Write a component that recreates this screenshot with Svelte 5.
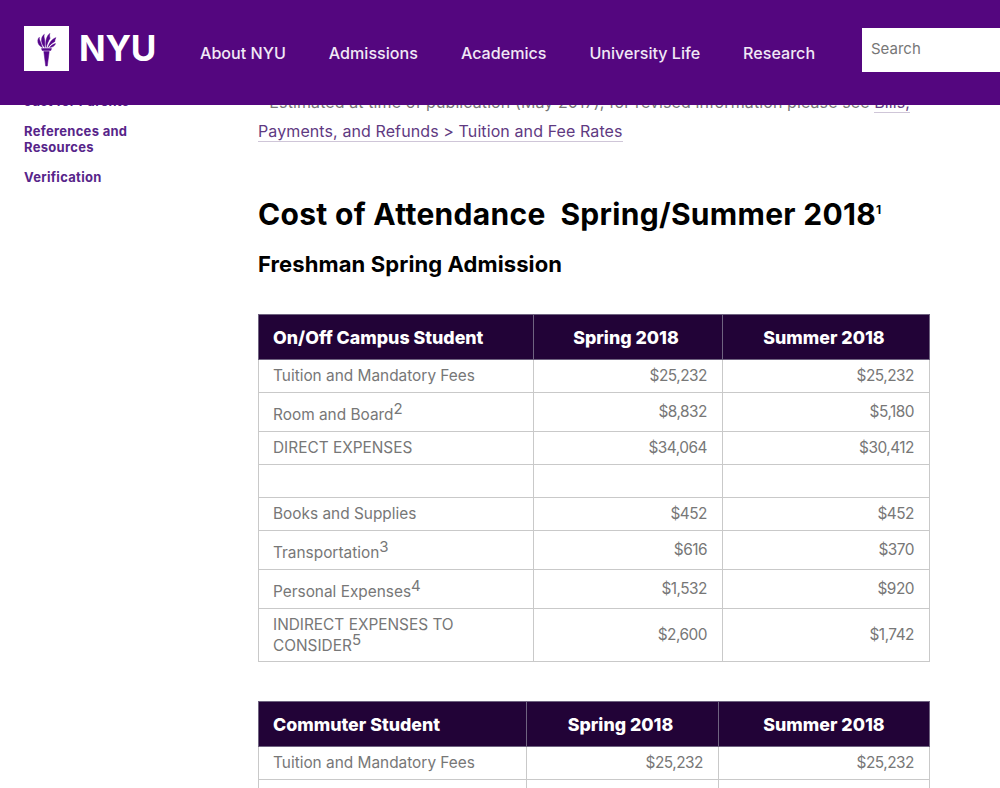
<script>
  const nav = ['About NYU', 'Admissions', 'Academics', 'University Life', 'Research'];
  const t1 = [
    { label: 'Tuition and Mandatory Fees', a: '$25,232', b: '$25,232', h: 33 },
    { label: 'Room and Board', sup: '2', a: '$8,832', b: '$5,180', h: 39, low: true },
    { label: 'DIRECT EXPENSES', a: '$34,064', b: '$30,412', h: 33 },
    { label: '', a: '', b: '', h: 33 },
    { label: 'Books and Supplies', a: '$452', b: '$452', h: 33 },
    { label: 'Transportation', sup: '3', a: '$616', b: '$370', h: 39, low: true },
    { label: 'Personal Expenses', sup: '4', a: '$1,532', b: '$920', h: 39, low: true },
    { label: 'INDIRECT EXPENSES TO CONSIDER', sup: '5', a: '$2,600', b: '$1,742', h: 53, wrap: true }
  ];
  const t2 = [
    { label: 'Tuition and Mandatory Fees', a: '$25,232', b: '$25,232', h: 33 },
    { label: '', a: '', b: '', h: 39 }
  ];
</script>

{#snippet table(title, rows, w1, w2, w3)}
  <table>
    <colgroup>
      <col style="width:{w1}px" /><col style="width:{w2}px" /><col style="width:{w3}px" />
    </colgroup>
    <thead>
      <tr><th class="first">{title}</th><th>Spring 2018</th><th>Summer 2018</th></tr>
    </thead>
    <tbody>
      {#each rows as r}
        <tr style="height:{r.h}px">
          <td class:low={r.low} class:wrap={r.wrap}>{r.label}{#if r.sup}<sup>{r.sup}</sup>{/if}</td>
          <td class="num">{r.a}</td>
          <td class="num">{r.b}</td>
        </tr>
      {/each}
    </tbody>
  </table>
{/snippet}

<div class="page">
  <header>
    <div class="brand">
      <div class="logo">
        <svg viewBox="0 0 45 45" width="45" height="45" aria-hidden="true">
          <g fill="#57068c" stroke="#57068c" stroke-width="0.5" stroke-linejoin="round">
            <path d="M19.800 25.500h5.400l-1.900 14.500h-1.600z"/>
            <path d="M17.500 22.600h10l-.7 1.900h-8.600z"/>
            <path d="M18.500 21.500c-3-1.500-4.900-3.800-4.700-7 .1-1.300.6-2.400 1.500-3.200-.2 1.300 0 2.400.6 3.300 1 2.300 1.600 4.600 2.600 6.900z"/>
            <path d="M20.700 21.500c-2.200-2.500-3.600-5.400-3.100-8.600.3-1.900 1.200-3.400 2.700-4.600-.5 1.800-.3 3.400.3 4.900.4 2.900.3 5.500.1 8.300z"/>
            <path d="M22.200 21.500c-.6-3-.6-6.300.5-9.400.6-1.900 1.600-3.500 3.100-4.700-.5 1.900-.2 3.400.3 4.800-1.800 2.900-3.100 5.900-3.900 9.300z"/>
            <path d="M23.900 21.500c.8-2.900 2.200-5.500 4.200-7.500 1.100-1.100 2.300-1.900 3.900-2.300-.9 1.300-1.200 2.500-1.100 3.700-2.900 1.500-5.100 3.500-7 6.100z"/>
            <path d="M25.700 21.500c1.500-2 3.400-3.300 5.800-3.900-.6 2.300-2.900 3.600-5.800 3.900z"/>
          </g>
        </svg>
      </div>
      <span class="wordmark">NYU</span>
    </div>
    <nav>
      {#each nav as item}<a href="#top">{item}</a>{/each}
    </nav>
    <div class="search">Search</div>
  </header>

  <div class="content">
    <aside>
      <a class="side clipped" href="#top">Just for Parents</a>
      <a class="side" href="#top">References and Resources</a>
      <a class="side" href="#top">Verification</a>
    </aside>
    <main>
      <p class="note">
        <sup class="lead">1</sup> Estimated at time of publication (May 2017), for revised information please see
        <a href="#top">Bills, Payments, and Refunds &gt; Tuition and Fee Rates</a>
      </p>
      <h2>Cost of Attendance&nbsp; Spring/Summer 2018<sup>1</sup></h2>
      <h3>Freshman Spring Admission</h3>
      {@render table('On/Off Campus Student', t1, 275, 189, 207)}
      <div class="second">
        {@render table('Commuter Student', t2, 268, 192, 211)}
      </div>
    </main>
  </div>
</div>

<style>
  :global(body) {
    margin: 0;
    background: #fff;
  }
  .page {
    position: relative;
    height: 788px;
    width: 1000px;
    overflow: hidden;
    font-family: "Inter", "Liberation Sans", sans-serif;
  }
  header {
    position: absolute;
    top: 0;
    left: 0;
    right: 0;
    height: 105px;
    background: #54067f;
    display: flex;
    align-items: flex-start;
    z-index: 2;
  }
  .brand {
    display: flex;
    align-items: center;
    gap: 10px;
    margin: 26px 0 0 24px;
    width: 176px;
  }
  .logo {
    width: 45px;
    height: 45px;
    background: #fff;
    flex: none;
  }
  .logo svg {
    display: block;
  }
  .wordmark {
    color: #fff;
    font: 700 35px/45px "Inter", "Liberation Sans", sans-serif;
    letter-spacing: -0.3px;
    width: 78px;
  }
  nav {
    display: flex;
    gap: 43px;
    margin-top: 43px;
    width: 662px;
  }
  nav a {
    color: #f1e8f6;
    text-decoration: none;
    font-size: 16.1px;
    font-weight: 500;
    line-height: 20px;
    white-space: nowrap;
  }
  .search {
    margin-top: 28px;
    width: 138px;
    height: 44px;
    flex: none;
    box-sizing: border-box;
    background: #fff;
    color: #777;
    padding-left: 9px;
    font-size: 15px;
    line-height: 42px;
  }
  .content {
    display: flex;
    padding-top: 88px;
  }
  aside {
    width: 258px;
    flex: none;
    box-sizing: border-box;
    padding: 5px 0 0 24px;
    display: flex;
    flex-direction: column;
    gap: 14px;
  }
  .side {
    width: 125px;
    color: #57258a;
    font-size: 13px;
    font-weight: 700;
    letter-spacing: 0.3px;
    line-height: 16px;
    text-decoration: none;
  }
  .clipped {
    white-space: nowrap;
  }
  main {
    width: 672px;
    flex: none;
  }
  .note {
    margin: 0 0 50px;
    width: 672px;
    color: #777;
    font-size: 16px;
    letter-spacing: 0.1px;
    line-height: 29px;
  }
  .note a {
    color: #5f3a82;
    text-decoration: none;
    border-bottom: 1px solid #cfc6d8;
  }
  .lead {
    font-size: 9px;
    line-height: 0;
    padding-right: 3px;
  }
  h2 {
    margin: 0;
    color: #000;
    font-size: 30px;
    font-weight: 700;
    letter-spacing: 0.3px;
    line-height: 36px;
    white-space: nowrap;
  }
  h2 sup {
    font-size: 12px;
    line-height: 0;
  }
  h3 {
    margin: 18px 0 36px;
    color: #000;
    font-size: 22px;
    font-weight: 700;
    letter-spacing: 0.1px;
    line-height: 28px;
  }
  table {
    width: 671px;
    table-layout: fixed;
    border-collapse: collapse;
    font-size: 15.4px;
  }
  th {
    height: 44px;
    padding: 0 18px 0 14px;
    background: #220337;
    color: #fff;
    border: 1px solid #6f6380;
    font-size: 17.8px;
    font-weight: 800;
    text-align: center;
  }
  th.first {
    text-align: left;
  }
  .second th:last-child {
    padding: 0 14px;
  }
  td {
    padding: 0 15px 1px 14px;
    border: 1px solid #c9c9c9;
    color: #777;
    line-height: 21px;
  }
  td.low {
    padding: 5px 15px 0 14px;
  }
  td.wrap {
    padding-bottom: 0;
  }
  td.num {
    text-align: right;
    padding-right: 15px;
    letter-spacing: -0.5px;
  }
  td sup {
    font-size: 15px;
    line-height: 0;
  }
  .second {
    margin-top: 39px;
  }
</style>
